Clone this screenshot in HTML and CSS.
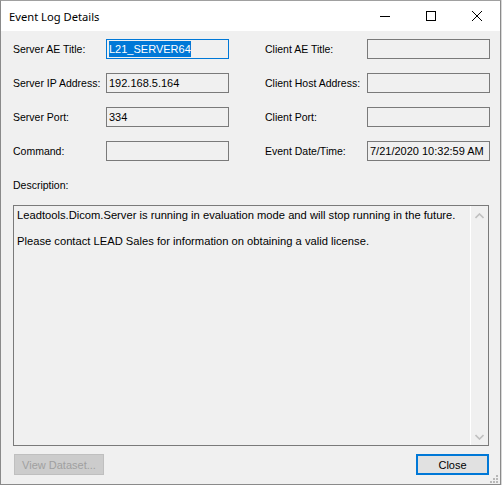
FILE: index.html
```html
<!DOCTYPE html>
<html lang="en">
<head>
    <meta charset="UTF-8">
    <title>Event Log Details</title>
    <link rel="stylesheet" href="styles.css">
</head>
<body>

    <div class="window">
        <div class="titlebar">
            <span class="title">Event Log Details</span>
            <div class="caption-buttons">
                <span class="caption-btn">
                    <svg width="10" height="10" viewBox="0 0 10 10"><path d="M0 5.5H10" stroke="#000" stroke-width="1"/></svg>
                </span>
                <span class="caption-btn">
                    <svg width="10" height="10" viewBox="0 0 10 10"><rect x="0.5" y="0.5" width="9" height="9" fill="none" stroke="#000" stroke-width="1"/></svg>
                </span>
                <span class="caption-btn">
                    <svg width="10" height="10" viewBox="0 0 10 10"><path d="M0 0L10 10M10 0L0 10" stroke="#000" stroke-width="1"/></svg>
                </span>
            </div>
        </div>

        <div class="client">
            <div class="fields">
                <label class="field-label">Server AE Title:</label>
                <div class="textbox focused"><span class="selection">L21_SERVER64</span></div>
                <label class="field-label right">Client AE Title:</label>
                <div class="textbox"></div>

                <label class="field-label">Server IP Address:</label>
                <div class="textbox">192.168.5.164</div>
                <label class="field-label right">Client Host Address:</label>
                <div class="textbox"></div>

                <label class="field-label">Server Port:</label>
                <div class="textbox">334</div>
                <label class="field-label right">Client Port:</label>
                <div class="textbox"></div>

                <label class="field-label">Command:</label>
                <div class="textbox"></div>
                <label class="field-label right">Event Date/Time:</label>
                <div class="textbox">7/21/2020 10:32:59 AM</div>
            </div>

            <div class="desc-label">Description:</div>

            <div class="memo">
                <div class="memo-text">
                    <p>Leadtools.Dicom.Server is running in evaluation mode and will stop running in the future.</p>
                    <p>Please contact LEAD Sales for information on obtaining a valid license.</p>
                </div>
                <div class="scrollbar">
                    <svg width="9" height="6" viewBox="0 0 9 6"><path d="M0.5 5L4.5 1L8.5 5" fill="none" stroke="#c0c0c0" stroke-width="1.6"/></svg>
                    <svg width="9" height="6" viewBox="0 0 9 6"><path d="M0.5 1L4.5 5L8.5 1" fill="none" stroke="#c0c0c0" stroke-width="1.6"/></svg>
                </div>
            </div>

            <div class="button-row">
                <button class="btn" disabled>View Dataset...</button>
                <button class="btn default">Close</button>
            </div>

            <svg class="grip" width="9" height="9" viewBox="0 0 9 9">
                <rect x="6" y="0" width="2" height="2" fill="#b8b8b8"/>
                <rect x="3" y="3" width="2" height="2" fill="#b8b8b8"/>
                <rect x="6" y="3" width="2" height="2" fill="#b8b8b8"/>
                <rect x="0" y="6" width="2" height="2" fill="#b8b8b8"/>
                <rect x="3" y="6" width="2" height="2" fill="#b8b8b8"/>
                <rect x="6" y="6" width="2" height="2" fill="#b8b8b8"/>
            </svg>
        </div>
    </div>

</body>
</html>
```

FILE: styles.css
```css
:root {
    --panel: #f0f0f0;
    --frame: #8a8a8a;
    --box-border: #7a7a7a;
    --accent: #0078d7;
}

* {
    box-sizing: border-box;
    margin: 0;
    padding: 0;
}

body {
    background-color: #d8d8d8;
    font-family: "Liberation Sans", Arial, sans-serif;
    font-size: 11px;
    color: #000;
}

.window {
    width: 501px;
    height: 485px;
    border: 1px solid var(--frame);
    border-top-color: #a0a0a0;
    display: flex;
    flex-direction: column;
    background-color: var(--panel);
}

.titlebar {
    height: 30px;
    background-color: #fff;
    display: flex;
    align-items: center;
    justify-content: space-between;
    padding-left: 8px;
}

.title {
    font-family: "Noto Sans", sans-serif;
    font-size: 11.2px;
    color: #000;
}

.caption-buttons {
    display: flex;
    height: 100%;
}

.caption-btn {
    width: 46px;
    display: flex;
    align-items: center;
    justify-content: center;
}

.client {
    flex: 1;
    position: relative;
    padding: 8px 10px 0 12px;
}

.fields {
    display: grid;
    grid-template-columns: 93px 123px 138px 123px;
    row-gap: 14px;
    grid-auto-rows: 20px;
    align-items: center;
}

.field-label {
    font-size: 10.5px;
    white-space: nowrap;
}

.field-label.right {
    padding-left: 36px;
}

.textbox {
    height: 20px;
    border: 1px solid var(--box-border);
    background-color: var(--panel);
    padding: 0 2px;
    line-height: 18px;
    white-space: nowrap;
    overflow: hidden;
}

.textbox.focused {
    border-color: var(--accent);
}

.selection {
    display: inline-block;
    background-color: var(--accent);
    color: #fff;
    line-height: 16px;
    vertical-align: top;
    margin-top: 1px;
}

.desc-label {
    margin-top: 14px;
    height: 20px;
    line-height: 20px;
    font-size: 10.5px;
}

.memo {
    margin-top: 10px;
    width: 476px;
    height: 241px;
    border: 1px solid var(--box-border);
    display: flex;
    background-color: var(--panel);
}

.memo-text {
    flex: 1;
    padding: 3px 3px;
    border-right: 1px solid #fff;
    font-size: 11.2px;
}

.memo-text p {
    line-height: 13px;
    margin-bottom: 13px;
}

.scrollbar {
    width: 17px;
    display: flex;
    flex-direction: column;
    justify-content: space-between;
    align-items: center;
    padding: 7px 0 5px;
}

.button-row {
    margin-top: 8px;
    width: 476px;
    display: flex;
    justify-content: space-between;
    padding-left: 1px;
}

.btn {
    font-family: "Liberation Sans", Arial, sans-serif;
    font-size: 11px;
    height: 21px;
    border: 1px solid #adadad;
    background-color: #e1e1e1;
    color: #000;
}

.btn:disabled {
    width: 90px;
    background-color: #cccccc;
    border-color: #bfbfbf;
    color: #a0a0a0;
}

.btn.default {
    width: 73px;
    border: 2px solid var(--accent);
}

.grip {
    position: absolute;
    right: 1px;
    bottom: 0;
}
```
